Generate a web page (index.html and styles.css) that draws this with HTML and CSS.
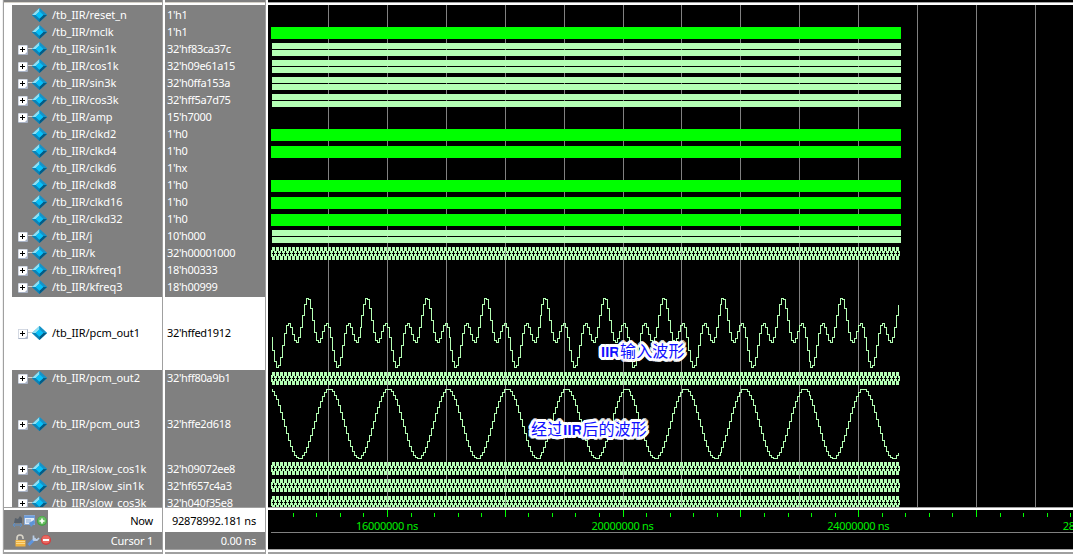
FILE: index.html
```html
<!DOCTYPE html>
<html lang="en">
<head>
<meta charset="utf-8">
<title>Wave</title>
<link rel="stylesheet" href="styles.css">
</head>
<body>
<svg class="defs" width="0" height="0">
  <symbol id="gem" viewBox="0 0 15 14">
    <path d="M7.5 0L15 7L7.5 14L0 7Z" fill="#0a94cc"/>
    <path d="M7.5 0V3.6L4 7H0Z" fill="#8fe0f4"/>
    <path d="M7.5 0L15 7H11L7.5 3.6Z" fill="#1593c8"/>
    <path d="M0 7H4L7.5 10.4V14Z" fill="#0a83b8"/>
    <path d="M15 7H11L7.5 10.4V14Z" fill="#045b85"/>
    <path d="M7.5 3.2L11.4 7L7.5 10.8L3.6 7Z" fill="#06c0f8"/>
  </symbol>
  <symbol id="plus" viewBox="0 0 10 10">
    <rect width="10" height="10" rx="1" fill="#a9b3c6"/>
    <path d="M0.500 0.500H9V7L7 9H0.500Z" fill="#fff"/>
    <path d="M2 4.500H7M4.500 2V7" stroke="#000" stroke-width="1"/>
  </symbol>
</svg>
<div class="window">
  <div class="edge"></div>
  <div class="pane names">
    <div class="cap"></div>
    <div class="list" id="names"></div>
    <div class="rule"></div>
    <div class="foot now">
      <div class="tools">
        <svg width="36" height="14" viewBox="0 0 36 14">
          <path d="M2 9L3 4L6 5L8 2L10 4V9Z" fill="#58616b"/><path d="M1 11H10M1 11L3 9M1 11L3 13M10 11L8 9M10 11L8 13" stroke="#5d8fc8" fill="none"/>
          <rect x="12.500" y="1.500" width="10" height="9" fill="#e6eef8" stroke="#86a8d6"/><path d="M12 2H23V4H12Z" fill="#6d9cda"/><path d="M14 6H19M14 8H19" stroke="#86a8d6"/><path d="M17 9L22 6L23 9L19 13Z" fill="#5d94d8"/>
          <circle cx="30" cy="7" r="5" fill="#43a243"/><circle cx="30" cy="6.500" r="4" fill="#69bd62"/><path d="M27.500 7H32.500M30 4.500V9.500" stroke="#fff" stroke-width="1.700"/>
        </svg>
      </div>
      <div class="label">Now</div>
    </div>
    <div class="foot cursor">
      <div class="tools">
        <svg width="40" height="13" viewBox="0 0 40 13">
          <path d="M5 7V4Q5 1 8 1T11 4V5" fill="none" stroke="#d8d4c8" stroke-width="1.600"/><rect x="3.500" y="6" width="10" height="6.500" fill="#efb341"/><path d="M4 7.500H13M4 9.500H13" stroke="#fbd98a"/>
          <path d="M16.500 11L21.500 6" stroke="#5d94dc" stroke-width="3"/><path d="M21 6.500L23.500 4M21.500 1.500V5L25 6L27 4" stroke="#b9cde6" stroke-width="1.700" fill="none"/>
          <circle cx="34" cy="6" r="5" fill="#d33d3d"/><circle cx="34" cy="5.500" r="4" fill="#ea6a62"/><path d="M31 6H37" stroke="#fff" stroke-width="2"/>
        </svg>
      </div>
      <div class="label">Cursor 1</div>
    </div>
    <div class="base"></div>
  </div>
  <div class="split"></div>
  <div class="pane values">
    <div class="cap"></div>
    <div class="list" id="values"></div>
    <div class="rule"></div>
    <div class="foot now"><div class="label">92878992.181 ns</div></div>
    <div class="foot cursor"><div class="label">0.00 ns</div></div>
    <div class="base"></div>
  </div>
  <div class="split last"></div>
  <div class="pane waves">
    <div class="cap"></div>
    <svg id="plot" width="805" height="502" viewBox="268 5 805 502">
      <defs>
        <pattern id="bus" x="272" width="4" height="17" y="246" patternUnits="userSpaceOnUse">
          <path d="M0 1H3V5H0ZM0 10H3V14H0Z" fill="#b4ffb4"/>
          <path d="M0 5H1V7H0ZM2 5H4V7H2ZM0 8H1V10H0ZM2 8H4V10H2ZM3 7H4V8H3Z" fill="#b4ffb4"/>
        </pattern>
      </defs>
    </svg>
    <div class="rule"></div>
    <svg id="ruler" width="805" height="39" viewBox="268 510 805 39"></svg>
    <div class="base"></div>
    <div class="note note-in"><b>IIR</b>输入波形</div>
    <div class="note note-out">经过<b>IIR</b>后的波形</div>
  </div>
</div>
<script src="wave.js"></script>
</body>
</html>
```
FILE: styles.css
```css
body {
  margin: 0;
  overflow: hidden;
  background: #fff;
  font: 11px/17px "Noto Sans", "DejaVu Sans", sans-serif;
}
.defs { position: absolute; }
.window { display: flex; width: 1073px; height: 554px; }
.edge {
  flex: none;
  width: 1px;
  margin-left: 2px;
  border-left: 1px solid #f0f0f0;
  background: #a0a0a0;
}
.pane { display: flex; flex-direction: column; flex: none; height: 554px; overflow: hidden; }
.names { width: 158px; }
.values { width: 100px; }
.waves { width: 805px; position: relative; }
.cap {
  flex: none;
  height: 2px;
  background: #808080;
  border-bottom: 1px solid #d4d0c8;
  margin-bottom: 2px;
}
.waves .cap { background: #000; border-color: #a0a0a0; }
.list {
  flex: none;
  box-sizing: border-box;
  height: 502px;
  padding-top: 3px;
  overflow: hidden;
  background: #808080;
}
.names .list { margin-left: 8px; }
.row {
  display: flex;
  align-items: center;
  box-sizing: border-box;
  height: 17px;
  color: #fff;
  white-space: pre;
}
.row.raised { padding-bottom: 4px; }
.row.nudged { padding-bottom: 2px; }
.row.tall { height: 73px; }
.row.selected { background: #fff; color: #000; }
.names .row { padding-left: 6px; letter-spacing: -0.07px; }
.values .row { padding-left: 2px; letter-spacing: -0.33px; }
.expander { flex: none; width: 10px; height: 10px; margin-top: 2px; }
.branch { width: 6px; height: 1px; margin-right: -2px; background: #d0d0d0; }
.gem { flex: none; width: 15px; height: 14px; margin-right: 5px; }
.leaf { width: 14px; }
.rule { flex: none; height: 2px; border-top: 1px solid #a0a0a0; background: #fff; }
.foot { display: flex; flex: none; align-items: center; background: #808080; color: #fff; }
.now { height: 22px; }
.cursor { height: 17px; }
.now .label { background: #fff; color: #000; }
.label {
  flex: 1;
  height: 100%;
  padding-right: 9px;
  line-height: 22px;
  letter-spacing: -0.2px;
  text-align: right;
  white-space: pre;
}
.cursor .label { line-height: 18px; }
.tools { width: 44px; height: 14px; }
.now .tools { display: flex; justify-content: flex-end; }
.tools svg { display: block; flex: none; }
.cursor .tools svg { margin-left: 8px; }
.base {
  flex: none;
  height: 2px;
  border-top: 1px solid #a0a0a0;
  border-bottom: 2px solid #a0a0a0;
  background: #fff;
}
.split { flex: none; width: 2px; border-left: 1px solid #a0a0a0; background: #fff; }
.waves svg { display: block; flex: none; background: #000; }
#plot { shape-rendering: crispEdges; }
.tick-label { fill: #00f000; text-anchor: middle; letter-spacing: -0.3px; }
.note {
  position: absolute;
  color: #1010ff;
  font: 16px/20px "Liberation Sans", "Noto Sans CJK SC", sans-serif;
  letter-spacing: 0.15px;
  white-space: nowrap;
  text-shadow:
    3px 0 #fff, -3px 0 #fff, 0 3px #fff, 0 -3px #fff,
    2px 2px #fff, -2px 2px #fff, 2px -2px #fff, -2px -2px #fff,
    1px 0 #fff, -1px 0 #fff, 0 1px #fff, 0 -1px #fff,
    3px 1px #fff, -3px 1px #fff, 3px -1px #fff, -3px -1px #fff,
    1px 3px #fff, -1px 3px #fff, 1px -3px #fff, -1px -3px #fff,
    0 0 4px #fff;
}
.note b { font-size: 14.5px; }
.note-in { left: 333px; top: 342px; }
.note-out { left: 263px; top: 420px; }
```
FILE: wave.js
```js
// name, value, kind of trace, expandable
const signals = [
  ["reset_n", "1'h1", "", 0],
  ["mclk", "1'h1", "clock", 0],
  ["sin1k", "32'hf83ca37c", "dense", 1],
  ["cos1k", "32'h09e61a15", "dense", 1],
  ["sin3k", "32'h0ffa153a", "dense", 1],
  ["cos3k", "32'hff5a7d75", "dense", 1],
  ["amp", "15'h7000", "", 1],
  ["clkd2", "1'h0", "clock", 0],
  ["clkd4", "1'h0", "clock", 0],
  ["clkd6", "1'hx", "", 0],
  ["clkd8", "1'h0", "clock", 0],
  ["clkd16", "1'h0", "clock", 0],
  ["clkd32", "1'h0", "clock", 0],
  ["j", "10'h000", "dense", 1],
  ["k", "32'h00001000", "bus", 1],
  ["kfreq1", "18'h00333", "", 1],
  ["kfreq3", "18'h00999", "", 1],
  ["pcm_out1", "32'hffed1912", "mixed", 1],
  ["pcm_out2", "32'hff80a9b1", "bus", 1],
  ["pcm_out3", "32'hffe2d618", "tone", 1],
  ["slow_cos1k", "32'h09072ee8", "bus", 1],
  ["slow_sin1k", "32'hf657c4a3", "bus", 1],
  ["slow_cos3k", "32'h040f35e8", "bus", 1]
];

const period = 59.34;
const mixed = x => {
  const t = (x - 308) * 2 * Math.PI / period;
  return 332.75 - 17.4 * (Math.cos(t) + Math.cos(3 * t));
};
const tone = x => 423.8 - 34.8 * Math.cos((x - 329.4) * 2 * Math.PI / period);

// Sample-and-hold trace on whole pixels.
function stepped(fn) {
  let d = "";
  for (let i = 0; ; i++) {
    const s = 271 + i * 1.978;
    if (s >= 900) break;
    const x = Math.floor(s) + 0.5;
    const y = Math.floor(fn(s + 0.8)) + 0.5;
    d += d ? `H${x}V${y}` : `M${x} ${y}`;
  }
  return `<path d="${d}" fill="none" stroke="#b4ffb4"/>`;
}

let names = "", values = "", traces = "", y = 8;

for (let k = -1; k <= 11; k++) {
  traces += `<rect x="${Math.round(386.95 + 58.9 * k)}" y="5" width="1" height="502" fill="#808080"/>`;
}

signals.forEach(([name, value, kind, open], index) => {
  const tall = kind === "mixed" || kind === "tone";
  const offset = index < 17 ? " raised" : index < 19 ? " nudged" : "";
  const cls = "row" + offset + (tall ? " tall" : "") + (kind === "mixed" ? " selected" : "");
  const lead = open
    ? '<svg class="expander"><use href="#plus"/></svg><span class="branch"></span>'
    : '<span class="leaf"></span>';
  names += `<div class="${cls}">${lead}<svg class="gem"><use href="#gem"/></svg>/tb_IIR/${name}</div>`;
  values += `<div class="${cls}">${value}</div>`;

  if (kind === "clock") traces += `<rect x="271" y="${y + 2}" width="630" height="12" fill="#00ff00"/>`;
  if (kind === "dense") {
    traces += `<path d="M272 ${y + 1}H901v6H272ZM272 ${y + 8}H901v6H272Z" fill="#b4ffb4"/>`;
  }
  if (kind === "bus") {
    const top = index > 17 ? y + 1 : y;
    traces += `<g transform="translate(0 ${top - 246})"><rect x="272" y="246" width="628" height="17" fill="url(#bus)"/>` +
      `<rect x="271" y="250" width="1" height="7" fill="#b4ffb4"/></g>`;
  }
  if (kind === "mixed") traces += stepped(mixed);
  if (kind === "tone") traces += stepped(tone);
  y += tall ? 73 : 17;
});

let marks = '<rect x="271" y="532" width="802" height="1" fill="#808080"/>';
for (let k = -4; k <= 29; k++) {
  const major = k % 5 === 0;
  const x = Math.round(387 + 23.56 * k);
  marks += `<rect x="${x}" y="${major ? 510 : 513}" width="1" height="${major ? 7 : 4}" fill="#00ff00"/>`;
}
for (let k = 0; k < 4; k++) {
  marks += `<text class="tick-label" x="${387 + 235.6 * k}" y="530">${16 + 4 * k}000000 ns</text>`;
}

document.getElementById("names").innerHTML = names;
document.getElementById("values").innerHTML = values;
document.getElementById("plot").insertAdjacentHTML("beforeend", traces);
document.getElementById("ruler").innerHTML = marks;
```
